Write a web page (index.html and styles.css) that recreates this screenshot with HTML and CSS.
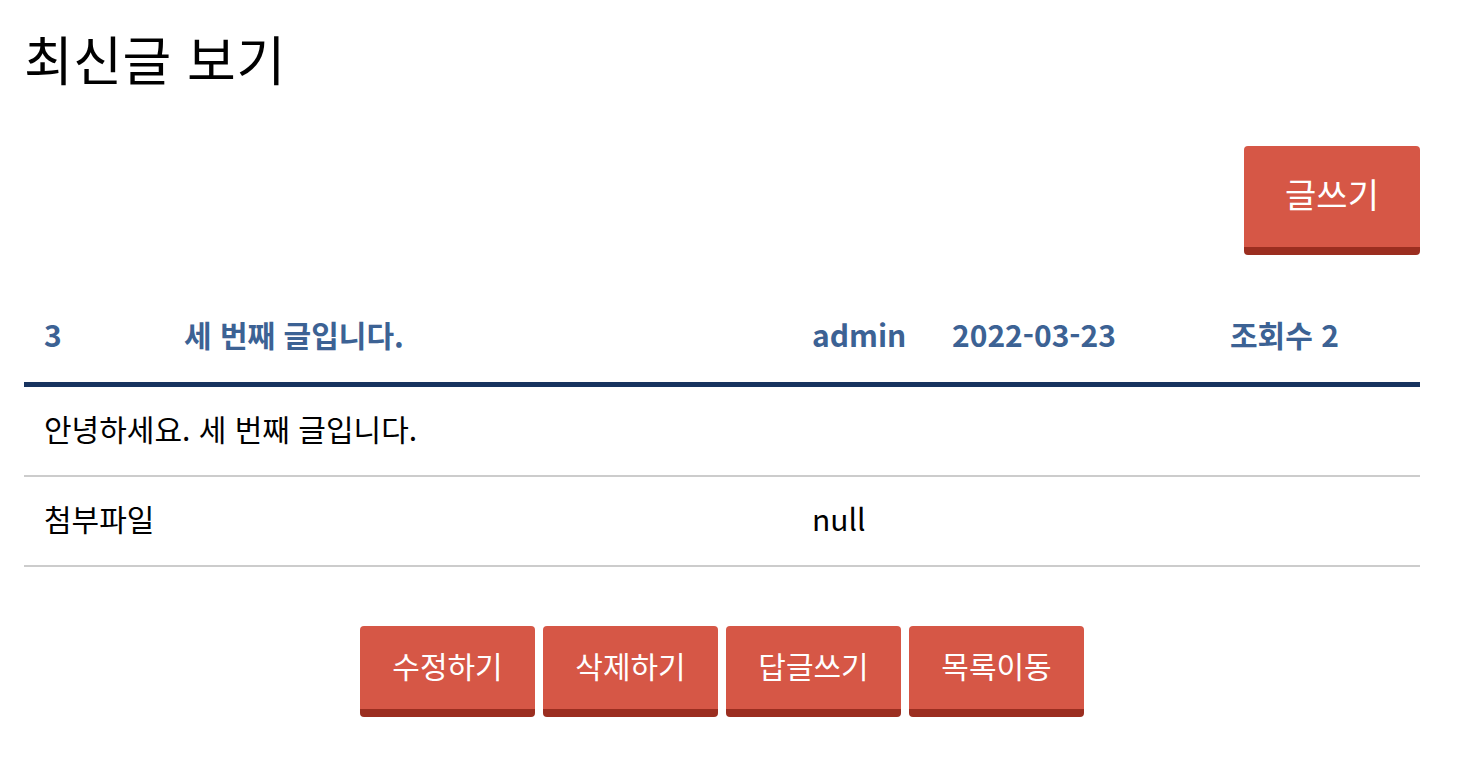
FILE: index.html
```html
<!DOCTYPE html>
<html lang="ko">
<head>
<meta charset="utf-8">
<title>최신글 보기</title>
<link rel="stylesheet" href="styles.css">
</head>
<body>
<div class="page">
  <h1 class="title">최신글 보기</h1>
  <div class="toolbar">
    <a class="btn btn-lg" href="#">글쓰기</a>
  </div>
  <div class="board">
    <div class="row head">
      <span>3</span>
      <span>세 번째 글입니다.</span>
      <span>admin</span>
      <span>2022-03-23</span>
      <span>조회수 2</span>
    </div>
    <div class="row body">
      <span class="full">안녕하세요. 세 번째 글입니다.</span>
    </div>
    <div class="row attach">
      <span class="label">첨부파일</span>
      <span>null</span>
    </div>
  </div>
  <div class="actions">
    <a class="btn" href="#">수정하기</a>
    <a class="btn" href="#">삭제하기</a>
    <a class="btn" href="#">답글쓰기</a>
    <a class="btn" href="#">목록이동</a>
  </div>
</div>
</body>
</html>
```

FILE: styles.css
```css
html, body {
  margin: 0;
  padding: 0;
  background: #fff;
}
body {
  font-family: "Noto Sans CJK KR", "Noto Sans", sans-serif;
  color: #000;
}
.page {
  padding: 0 46px 0 24px;
}
.title {
  margin: 0;
  padding-top: 20px;
  height: 82px;
  font-size: 53px;
  font-weight: 400;
  line-height: 76px;
  letter-spacing: 0.5px;
}
.toolbar {
  display: flex;
  justify-content: flex-end;
  margin-top: 44px;
}
.btn {
  display: flex;
  align-items: center;
  justify-content: center;
  box-sizing: border-box;
  width: 175px;
  height: 91px;
  padding-bottom: 6px;
  background: #d65746;
  border-bottom: 8px solid #9b2e20;
  border-radius: 4px;
  color: #fff;
  font-size: 30px;
  text-decoration: none;
}
.btn-lg {
  width: 176px;
  height: 109px;
  font-size: 34px;
}
.board {
  margin-top: 37px;
}
.row {
  display: grid;
  grid-template-columns: 140px 628px 140px 278px 1fr;
  align-items: center;
  box-sizing: border-box;
  height: 90px;
  padding: 0 0 7px 20px;
  font-size: 30px;
  border-bottom: 2px solid #cccccc;
}
.head {
  height: 95px;
  border-bottom: 5px solid #17335f;
  color: #3c6294;
  font-weight: 700;
}
.body .full {
  grid-column: 1 / -1;
}
.attach .label {
  grid-column: 1 / 3;
}
.actions {
  display: flex;
  justify-content: center;
  gap: 8px;
  margin-top: 59px;
}
```
